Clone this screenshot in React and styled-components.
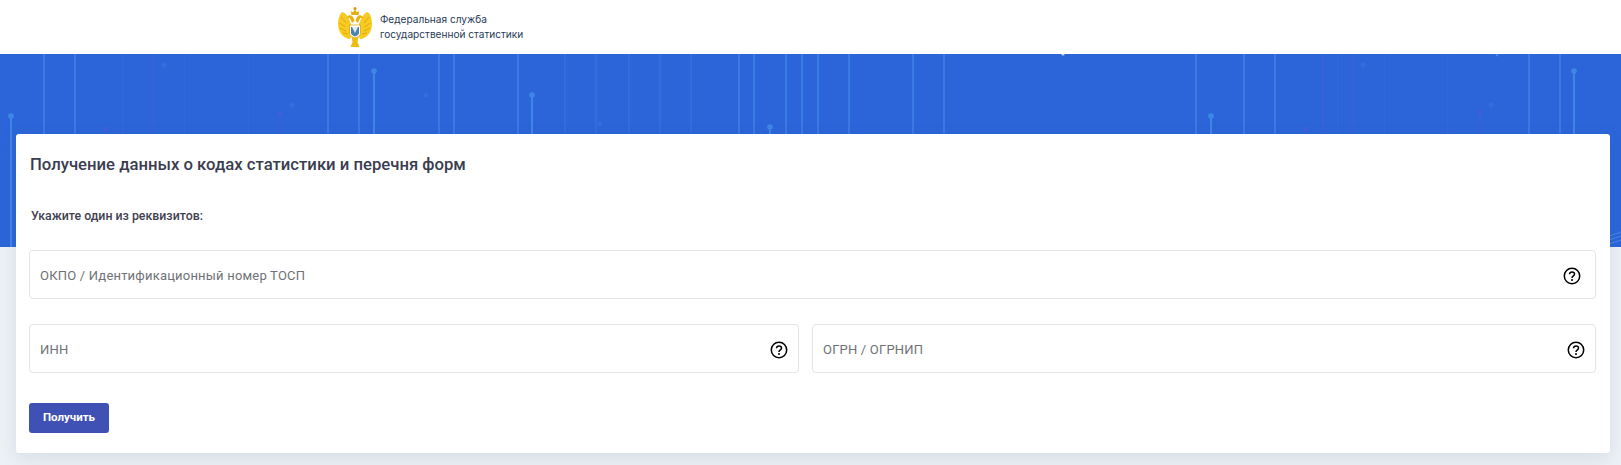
import React from 'react';
import styled, { createGlobalStyle } from 'styled-components';

const GlobalStyle = createGlobalStyle`
	html, body {
		margin: 0;
		padding: 0;
		background: #eef2f7;
		font-family: Roboto, "Liberation Sans", sans-serif;
	}
	* {
		box-sizing: border-box;
	}
`;

const Page = styled.div`
	position: relative;
	height: 465px;
	overflow: hidden;
`;

const Header = styled.header`
	display: flex;
	align-items: center;
	gap: 8px;
	height: 54px;
	padding: 0 0 1px 338px;
	background: #fff;
`;

const OrgName = styled.div`
	font-family: Inter, "Liberation Sans", sans-serif;
	font-size: 10.1px;
	line-height: 15px;
	color: #1f3a57;
`;

const Main = styled.main`
	position: relative;
	padding: 80px 11px 0 16px;
`;

const BannerArt = styled.svg`
	position: absolute;
	left: 0;
	top: 0;
	display: block;
`;

const Card = styled.section`
	position: relative;
	height: 319px;
	padding: 21px 14px 0 13px;
	background: #fff;
	border-radius: 3px;
	box-shadow: 0 6px 20px rgba(60, 90, 130, 0.14);
`;

const Title = styled.h1`
	margin: 0 0 0 1px;
	font-size: 16.7px;
	line-height: 20px;
	font-weight: 500;
	color: #3a3d4f;
`;

const Label = styled.p`
	margin: 32px 0 0 2px;
	font-size: 12.35px;
	line-height: 18px;
	font-weight: 500;
	color: #3f4150;
`;

const Fields = styled.div`
	display: grid;
	grid-template-columns: 770px 784px;
	column-gap: 13px;
	row-gap: 25px;
	margin-top: 25px;
`;

const Field = styled.label`
	display: flex;
	align-items: center;
	grid-column: ${({ $wide }) => ($wide ? '1 / -1' : 'auto')};
	height: 49px;
	padding: 0 ${({ $iconRight }) => $iconRight}px 0 10px;
	border: 1px solid #e2e4e7;
	border-radius: 4px;
	background: #fff;
`;

const Input = styled.input`
	flex: 1;
	min-width: 0;
	border: 0;
	outline: 0;
	padding: 0;
	margin-top: 1px;
	background: transparent;
	font-family: inherit;
	font-size: 13px;
	letter-spacing: 0.2px;
	color: #333;

	&::placeholder {
		color: #6f7276;
		opacity: 1;
	}
`;

const HelpIcon = styled.svg`
	flex: none;
	margin-top: 3px;
`;

const Submit = styled.button`
	display: block;
	width: 80px;
	height: 30px;
	margin-top: 30px;
	padding: 0 0 2px;
	border: 0;
	border-radius: 3px;
	background: #3f51b5;
	color: #fff;
	font-family: inherit;
	font-size: 11.5px;
	font-weight: 700;
`;

const brightLines = [43, 74, 327, 358, 438, 453, 517, 738, 753, 785, 801, 817, 848, 912, 943, 1195, 1243, 1274, 1528, 1559];
const softLines = [564, 595, 628, 659, 690];
const faintLines = [122, 184, 248, 1337, 1384, 1447];
const purpleLines = [153, 1322, 1353];
const pins = [
	{ x: 11, y: 116 },
	{ x: 374, y: 71 },
	{ x: 532, y: 95 },
	{ x: 770, y: 127 },
	{ x: 1211, y: 116 },
	{ x: 1574, y: 71 },
];
const purplePins = [
	{ x: 106, y: 129 },
	{ x: 280, y: 114 },
	{ x: 1306, y: 129 },
	{ x: 1480, y: 112 },
];
const dots = [
	{ x: 164, y: 65 },
	{ x: 292, y: 105 },
	{ x: 426, y: 95 },
	{ x: 600, y: 124 },
	{ x: 1363, y: 65 },
	{ x: 1491, y: 105 },
];

const Banner = () => (
	<BannerArt width="1621" height="193" viewBox="0 54 1621 193">
		<rect x="0" y="54" width="1621" height="193" fill="#2b65d9" />
		{faintLines.map((x) => (
			<rect key={x} x={x} y="54" width="1.5" height="193" fill="#3169dc" />
		))}
		{purpleLines.map((x) => (
			<rect key={x} x={x} y="54" width="1.5" height="193" fill="#3c60dc" />
		))}
		{softLines.map((x) => (
			<rect key={x} x={x} y="54" width="2" height="193" fill="#306edc" />
		))}
		{brightLines.map((x) => (
			<rect key={x} x={x} y="54" width="2" height="193" fill="#3a7ae3" />
		))}
		{pins.map(({ x, y }) => (
			<g key={x} fill="#3f87e6">
				<rect x={x - 1} y={y} width="2" height={247 - y} />
				<circle cx={x} cy={y} r="2.8" />
			</g>
		))}
		{purplePins.map(({ x, y }) => (
			<g key={x} fill="#3f5fdc">
				<rect x={x - 0.75} y={y} width="1.5" height={247 - y} />
				<circle cx={x} cy={y} r="2.6" />
			</g>
		))}
		{dots.map(({ x, y }) => (
			<circle key={x} cx={x} cy={y} r="2.5" fill="#336dde" />
		))}
		<circle cx="1063" cy="54" r="1.6" fill="#cfe0fb" />
		<circle cx="1497" cy="55" r="1.4" fill="#4a84e6" />
		<path d="M1609 236l12-4M1609 240l12-4M1609 244l12-4" stroke="#4a84e6" strokeWidth="1" fill="none" />
	</BannerArt>
);

const Emblem = () => (
	<svg width="34" height="40" viewBox="0 0 34 40">
		<path d="M13 17C11 12 9 7 5 5 2 6 .5 10 0 16c0 5 1 9 4 12 2 2 5 4 8 4l2-4z" fill="#f7cb22" />
		<path d="M21 17c2-5 4-10 8-12 3 1 4.500 5 5 11 0 5-1 9-4 12-2 2-5 4-8 4l-2-4z" fill="#f7cb22" />
		<path d="M3 10l5 6M1.500 16l6 4M2 21l6 3M5 26l5 1M31 10l-5 6M32.500 16l-6 4M32 21l-6 3M29 26l-5 1" stroke="#e3a70e" strokeWidth="1" fill="none" />
		<path d="M13.500 30h7l-1 5 2 5h-9l2-5z" fill="#efba12" />
		<path d="M14 16c-.5-2-1.500-4-2.500-5-.8-.6-2 0-3 1 .5-2.500 2-4 3.700-3.700C14.500 8.600 16 11 16.500 14z" fill="#eab10f" />
		<path d="M20 16c.5-2 1.500-4 2.500-5 .8-.6 2 0 3 1-.5-2.500-2-4-3.700-3.700C19.500 8.600 18 11 17.500 14z" fill="#eab10f" />
		<path d="M13.500 8l-.7-4 2.400 1.200L17 2l1.800 3.200L21.200 4l-.7 4z" fill="#e5ac10" />
		<circle cx="17" cy="1.500" r="1.500" fill="#d9990a" />
		<path d="M11.500 18h11v8c0 2.500-2.500 4-5.500 5-3-1-5.500-2.500-5.500-5z" fill="#fff" stroke="#dca90f" strokeWidth="0.8" />
		<path d="M13 20h8v6c0 1.500-1.800 2.500-4 3.400-2.200-.9-4-1.900-4-3.400z" fill="#4a84a8" />
		<path d="M14 20h6l-3 6z" fill="#e4eaee" />
	</svg>
);

const Help = () => (
	<HelpIcon width="18" height="18" viewBox="0 0 18 18" fill="none" stroke="#000">
		<circle cx="9" cy="9" r="7.700" strokeWidth="1.500" />
		<path d="M6.500 7.200C6.500 5.700 7.600 4.900 9 4.900c1.500 0 2.500.9 2.500 2.100 0 1.100-.7 1.600-1.400 2.100-.7.500-1.100.9-1.100 1.800" strokeWidth="1.500" />
		<circle cx="9" cy="13" r="1" fill="#000" stroke="none" />
	</HelpIcon>
);

const FormField = ({ placeholder, wide, iconRight }) => (
	<Field $wide={wide} $iconRight={iconRight}>
		<Input placeholder={placeholder} />
		<Help />
	</Field>
);

export default function App() {
	return (
		<Page>
			<GlobalStyle />
			<Header>
				<Emblem />
				<OrgName>
					Федеральная служба
					<br />
					государственной статистики
				</OrgName>
			</Header>
			<Main>
				<Banner />
				<Card>
					<Title>Получение данных о кодах статистики и перечня форм</Title>
					<Label>Укажите один из реквизитов:</Label>
					<Fields>
						<FormField wide placeholder="ОКПО / Идентификационный номер ТОСП" iconRight={14} />
						<FormField placeholder="ИНН" iconRight={10} />
						<FormField placeholder="ОГРН / ОГРНИП" iconRight={10} />
					</Fields>
					<Submit type="button">Получить</Submit>
				</Card>
			</Main>
		</Page>
	);
}
